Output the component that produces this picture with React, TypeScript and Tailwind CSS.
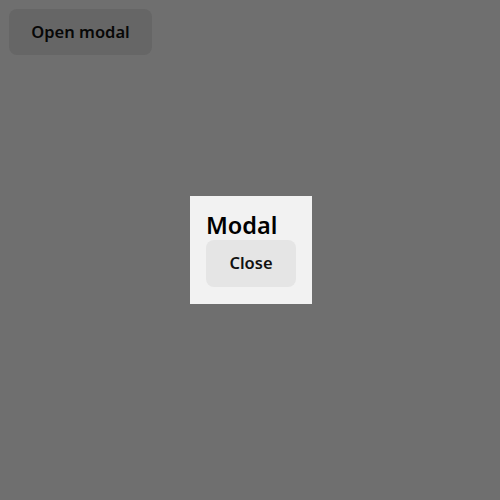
export default function App() {
  return (
    <div className="relative min-h-screen bg-white font-['Noto_Sans',sans-serif]">
      <div className="p-[9px]">
        <button className="h-[46px] w-[143px] rounded-lg bg-[#eaeaea] text-[16.5px] font-semibold text-[#111]">
          Open modal
        </button>
      </div>

      {/* Overlay */}
      <div className="fixed inset-0 flex items-center justify-center bg-black/[0.565]">
        <div className="ml-[2px] flex flex-col items-start bg-[#f2f2f2] px-4 pt-[17px] pb-[17px]">
          <h2 className="text-[23.5px] leading-[24px] font-semibold text-black">Modal</h2>
          <button className="mt-[3px] h-[47px] w-[90px] rounded-lg bg-[#e5e5e5] text-[16.5px] font-semibold text-[#111]">
            Close
          </button>
        </div>
      </div>
    </div>
  );
}
